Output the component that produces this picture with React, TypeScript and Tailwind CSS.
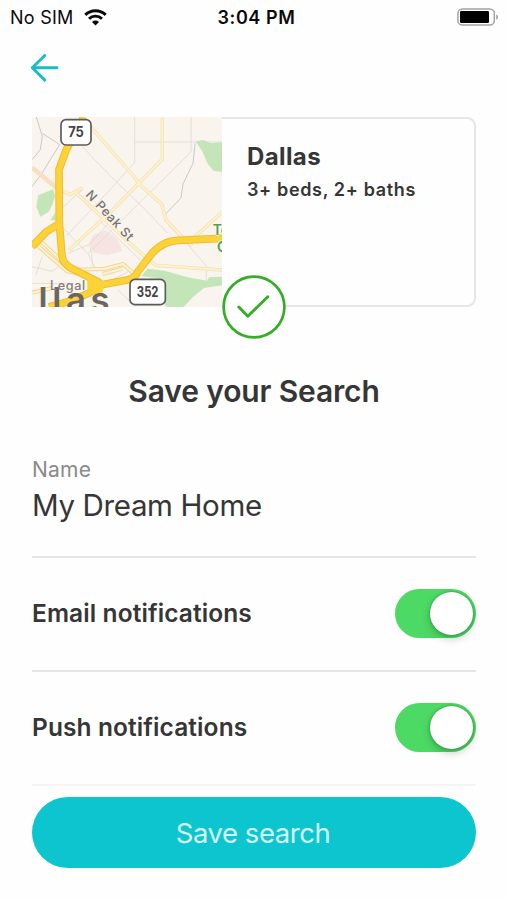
import { useState } from "react";

const MAP_FONT = "Inter, 'Liberation Sans', sans-serif";

function WifiIcon() {
  return (
    <svg width="23" height="17" viewBox="0 0 23 17" fill="none" stroke="#0a0a0a" strokeWidth="2.9">
      <path d="M1.3 5.9a14.6 14.6 0 0 1 20.4 0" />
      <path d="M5 9.8a9.3 9.3 0 0 1 13 0" />
      <path d="M8 13a5 5 0 0 1 7 0L11.5 16.6Z" fill="#0a0a0a" stroke="none" />
    </svg>
  );
}

function BatteryIcon() {
  return (
    <svg width="42" height="18" viewBox="0 0 42 18" fill="none">
      <rect x="0.9" y="0.9" width="36.4" height="16.2" rx="4.6" fill="#fff" stroke="#a3a3a3" strokeWidth="1.5" />
      <rect x="3" y="3" width="29" height="12" rx="1.2" fill="#000" />
      <path d="M39.4 6.4c1.9.6 1.9 4.6 0 5.2Z" fill="#8c8c8c" />
    </svg>
  );
}

function StatusBar() {
  return (
    <div className="grid h-[34px] grid-cols-3 items-center pr-2 pl-[10px] text-[#0a0a0a]">
      <div className="flex items-center gap-[10px]">
        <span className="text-[18px] tracking-[0.25px] whitespace-nowrap">No SIM</span>
        <WifiIcon />
      </div>
      <span className="pl-1 text-center text-[18px] font-semibold tracking-[0.6px] whitespace-nowrap">3:04 PM</span>
      <div className="flex justify-end">
        <BatteryIcon />
      </div>
    </div>
  );
}

function MapThumbnail() {
  return (
    <svg width="190" height="190" viewBox="21 21 570 570" className="block shrink-0" fill="none">
      <rect x="21" y="21" width="570" height="570" fill="#f9f4ed" />

      {/* parks */}
      <g fill="#c3e5b7">
        <path d="M512 94l24-4 22 10 33-4v90l-26-4-18-22-14-34Z" />
        <path d="M40 256l44-18 6 20-8 26-12 22-24 14-12-30Z" />
        <path d="M76 330l16-24v26Z" />
        <path d="M368 476l50 6 70 20 58 10 6-10 39-2v26l-54 8-34 28-28 30h-50l-12-20-8-66-56-8Z" />
      </g>
      <path d="M204 376l38-16 34 26 16 36-44 14-42-8-14-28Z" fill="#f6e4e2" />

      {/* side streets */}
      <g stroke="#dcd8d2" strokeWidth="2.2">
        <path d="M329 21v136l-72 80-132 140" />
        <path d="M498 21v105L190 430M330 96h261" />
        <path d="M172 110l88 92 110 106 58 62" />
        <path d="M430 344l60 62 54 62v42" />
        <path d="M104 300l70-62M110 350l80 82 24 52M222 330l124 120M268 320l-80 90" />
        <path d="M21 470l60 14 36-24M21 520h110M52 440l-20 56" />
        <path d="M196 410l10 70M320 480l-60 30M280 540l52 51M130 430l60-26" />
      </g>
      <path d="M34 21l18 58-6 40-25 30M52 70l52 34-56 90-27 36M510 100l-6 60-30 62-6 42-50 52" stroke="#c9c9cd" strokeWidth="3" />

      {/* secondary roads */}
      <g strokeLinejoin="round">
        <path
          d="M188 40l138 158 18 26 66 58 12 46 46 50 34 30M412 21v126l-70 72-76 78-134 124M100 236l36 18 36-20M150 246l184 172 58 48 199 14M500 390l91-84"
          stroke="#f3dfa9"
          strokeWidth="10"
        />
        <path
          d="M188 40l138 158 18 26 66 58 12 46 46 50 34 30M412 21v126l-70 72-76 78-134 124M100 236l36 18 36-20M150 246l184 172 58 48 199 14M500 390l91-84"
          stroke="#fcf2cf"
          strokeWidth="6"
        />
        <path d="M30 400l96 84 44 8M48 394l84 80M140 480l100-4 54-14 40 36M21 548l60-14M232 492l60-16" stroke="#f0d795" strokeWidth="12" />
        <path d="M30 400l96 84 44 8M48 394l84 80M140 480l100-4 54-14 40 36M21 548l60-14M232 492l60-16" stroke="#fdf3d2" strokeWidth="6" />
        <path d="M21 172l74 62" stroke="#f8dfbf" strokeWidth="13" />
      </g>

      {/* highways */}
      <g strokeLinejoin="round">
        <path
          d="M176 21l-52 98-22 60 1 160 8 100q4 24 32 38l76 38 14 12M21 410l42-44 38-24M72 591l70-20 50-22 34-24 84-16q18-2 30-26l34-44q34-46 86-48l176-8"
          stroke="#eebb39"
          strokeWidth="23"
        />
        <path
          d="M176 21l-52 98-22 60 1 160 8 100q4 24 32 38l76 38 14 12M21 410l42-44 38-24M72 591l70-20 50-22 34-24 84-16q18-2 30-26l34-44q34-46 86-48l176-8"
          stroke="#fcd337"
          strokeWidth="17"
        />
        <path d="M186 506l54 8-8 34-44 8Z" fill="#fcd337" />
      </g>

      {/* labels */}
      <g fontFamily={MAP_FONT}>
        <text x="-33" y="606" fontSize="104" fontWeight="600" fill="#6b6660" letterSpacing="14">
          allas
        </text>
        <text x="75" y="541" fontSize="38" fontWeight="500" fill="#857e79" letterSpacing="1.8">
          Legal
        </text>
        <text transform="translate(180 256) rotate(47)" fontSize="38" fontWeight="500" fill="#77716f" stroke="#f9f4ed" strokeWidth="5" paintOrder="stroke" letterSpacing="1.8">
          N Peak St
        </text>
        <g fontSize="42" fontWeight="600" fill="#56a04e" stroke="#f9f4ed" strokeWidth="4" paintOrder="stroke">
          <text x="563" y="376">Te</text>
          <text x="576" y="427">C</text>
        </g>
        <g fill="#fff" stroke="#5c5c5c" strokeWidth="5">
          <rect x="108" y="29" width="90" height="76" rx="15" />
          <rect x="315" y="508" width="106" height="76" rx="15" />
        </g>
        <g fontSize="43" fontWeight="700" fill="#444" textAnchor="middle">
          <text x="153" y="82" textLength="47" lengthAdjust="spacingAndGlyphs">75</text>
          <text x="368" y="562" textLength="65" lengthAdjust="spacingAndGlyphs">352</text>
        </g>
      </g>
    </svg>
  );
}

function SearchCard() {
  return (
    <section className="relative flex h-[190px]">
      <MapThumbnail />
      <div className="flex-1 rounded-r-[9px] border-2 border-l-0 border-[#e6e6e6] pt-[23px] pl-[25px]">
        <h2 className="text-[24px] leading-[30px] font-bold tracking-[0.4px] whitespace-nowrap">Dallas</h2>
        <p className="mt-1 text-[18px] leading-7 font-semibold tracking-[0.65px] whitespace-nowrap">3+ beds, 2+ baths</p>
      </div>
      {/* saved badge sits on the card's bottom edge */}
      <svg className="absolute top-[158px] left-[190px]" width="64" height="64" viewBox="0 0 64 64" fill="none" stroke="#35ae25">
        <circle cx="32" cy="32" r="30.4" fill="#fff" strokeWidth="2.7" />
        <path d="M16.8 32l9 9.2 20-19.4" strokeWidth="2.9" strokeLinecap="round" strokeLinejoin="round" />
      </svg>
    </section>
  );
}

type ToggleRowProps = {
  label: string;
  checked: boolean;
  onChange: (value: boolean) => void;
};

function ToggleRow({ label, checked, onChange }: ToggleRowProps) {
  return (
    <div className="flex h-28 items-center justify-between pb-0.5">
      <span className="text-[24.5px] font-semibold tracking-[0.1px] whitespace-nowrap">{label}</span>
      <button
        type="button"
        role="switch"
        aria-checked={checked}
        aria-label={label}
        onClick={() => onChange(!checked)}
        className={`flex h-[49px] w-[81px] items-center rounded-full px-[3px] ${checked ? "justify-end bg-[#4cd964]" : "justify-start bg-[#e5e5e5]"}`}
      >
        <span className="h-[43px] w-[43px] rounded-full bg-white shadow-[0_4px_8px_rgba(0,0,0,0.2),0_0_3px_rgba(0,0,0,0.3)]" />
      </button>
    </div>
  );
}

export default function App() {
  const [email, setEmail] = useState(true);
  const [push, setPush] = useState(true);

  return (
    <div className="h-[900px] w-[507px] overflow-hidden bg-[#fefefe] font-['Inter','Liberation_Sans',sans-serif] text-[#363636]">
      <StatusBar />
      <header className="flex h-[83px] pt-5 pl-[30px]">
        <button type="button" aria-label="Back" className="h-7 w-[30px]">
          <svg width="30" height="28" viewBox="0 0 30 28" fill="none" stroke="#1bbdc5" strokeWidth="2.9" strokeLinecap="round" strokeLinejoin="round">
            <path d="M27 13.7H2.3M14.8 1.5L2.3 13.7l12.5 12.4" />
          </svg>
        </button>
      </header>

      <main className="px-8 pr-[31px]">
        <SearchCard />
        <h1 className="mt-16 text-center text-[30px] leading-10 font-semibold tracking-[-0.15px] whitespace-nowrap">Save your Search</h1>

        <div className="mt-[45px] h-[102px] border-b-2 border-[#e5e5e5]">
          <p className="text-[21px] leading-7 tracking-[0.25px] text-[#8a8a8a]">Name</p>
          <p className="mt-px text-[29.5px] leading-10 tracking-[-0.36px] whitespace-nowrap">My Dream Home</p>
        </div>
        <ToggleRow label="Email notifications" checked={email} onChange={setEmail} />
        <div className="h-0.5 bg-[#e5e5e5]" />
        <ToggleRow label="Push notifications" checked={push} onChange={setPush} />
        <div className="h-0.5 bg-[#f5f5f5]" />

        <button type="button" className="mt-[11px] h-[71px] w-full rounded-full bg-[#0dc5ce] pt-0.5 pr-0.5 text-[27.5px] tracking-[-0.45px] text-[#d5fafb]">
          Save search
        </button>
      </main>
    </div>
  );
}
